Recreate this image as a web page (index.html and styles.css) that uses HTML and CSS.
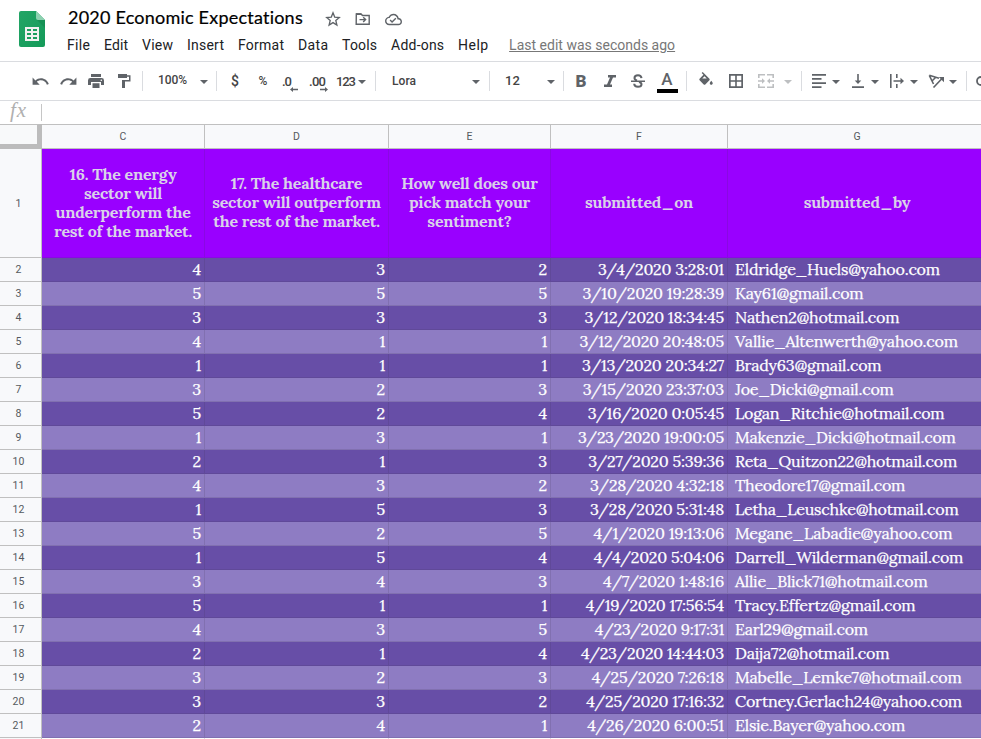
FILE: index.html
```html
<!DOCTYPE html>
<html lang="en">
<head>
<meta charset="utf-8">
<title>2020 Economic Expectations</title>
<link rel="stylesheet" href="styles.css">
</head>
<body>
<header class="top">
  <svg class="logo" viewBox="0 0 26 36" width="26" height="36">
    <defs><linearGradient id="g" x1="0" y1="0" x2="1" y2="1"><stop offset="0" stop-color="#23a566"/><stop offset="1" stop-color="#149a59"/></linearGradient></defs>
    <path d="M2 0H17L26 9V34a2 2 0 0 1-2 2H2a2 2 0 0 1-2-2V2a2 2 0 0 1 2-2z" fill="url(#g)"/>
    <path d="M18 9H26V17z" fill="#12834b" opacity=".5"/>
    <path d="M17 0L26 9H19a2 2 0 0 1-2-2z" fill="#8ed1b1"/>
    <path fill-rule="evenodd" d="M6 16H20V30H6zM8 18V20H12V18zM14 18V20H18V18zM8 22V24H12V22zM14 22V24H18V22zM8 26V28H12V26zM14 26V28H18V26z" fill="#f1f1f1"/>
  </svg>
  <div class="heading">
    <div class="title-row">
      <h1><span data-fit="235">2020 Economic Expectations</span></h1>
      <svg class="star" viewBox="0 0 16 16" width="16" height="16"><path d="M8 1.8L9.7 6.1L14.3 6.5L10.8 9.5L11.9 14L8 11.6L4.1 14L5.2 9.5L1.7 6.5L6.3 6.1Z" fill="none" stroke="#5f6368" stroke-width="1.3"/></svg>
      <svg class="folder" viewBox="0 0 16 14" width="16" height="14"><path d="M1.3 2H6l1.5 1.5h6.7V12.2H1.2z" fill="none" stroke="#5f6368" stroke-width="1.4"/><path d="M1 1.2H6L7.5 3H1z" fill="#5f6368"/><path d="M4.5 7.6H10.500M8.200 5.200L10.600 7.600L8.200 10" fill="none" stroke="#5f6368" stroke-width="1.4"/></svg>
      <svg class="cloud" viewBox="0 0 24 24" width="17" height="17"><path fill="#5f6368" d="M19.35 10.04C18.67 6.59 15.64 4 12 4 9.11 4 6.6 5.64 5.35 8.04 2.34 8.36 0 10.91 0 14c0 3.31 2.69 6 6 6h13c2.76 0 5-2.24 5-5 0-2.64-2.05-4.78-4.65-4.96zM19 18H6c-2.21 0-4-1.79-4-4 0-2.05 1.53-3.76 3.56-3.97l1.07-.11.5-.95C8.08 7.14 9.94 6 12 6c2.62 0 4.88 1.86 5.39 4.43l.3 1.5 1.53.11c1.56.1 2.78 1.41 2.78 2.96 0 1.65-1.35 3-3 3zm-9-3.82l-2.09-2.09L6.5 13.5 10 17l6.01-6.01-1.41-1.41z"/></svg>
    </div>
    <nav class="menu">
      <span data-fit="23">File</span><span data-fit="24">Edit</span><span data-fit="31">View</span><span data-fit="37">Insert</span><span data-fit="46">Format</span><span data-fit="30">Data</span><span data-fit="35">Tools</span><span data-fit="53">Add-ons</span><span data-fit="30">Help</span>
      <a class="edited" data-fit="166">Last edit was seconds ago</a>
    </nav>
  </div>
</header>

<div class="toolbar">
  <div class="btn"><svg viewBox="0 0 24 24" width="19" height="19"><path d="M12.5 8c-2.65 0-5.05.99-6.9 2.6L2 7v9h9l-3.62-3.62c1.39-1.16 3.16-1.88 5.12-1.88 3.54 0 6.55 2.31 7.6 5.5l2.37-.78C21.08 11.03 17.15 8 12.5 8z"/></svg></div>
  <div class="btn"><svg viewBox="0 0 24 24" width="19" height="19"><path d="M18.4 10.6C16.55 8.99 14.15 8 11.5 8c-4.65 0-8.58 3.03-9.96 7.22L3.9 16c1.05-3.19 4.05-5.5 7.6-5.5 1.95 0 3.73.72 5.12 1.88L13 16h9V7l-3.6 3.6z"/></svg></div>
  <div class="btn"><svg viewBox="0 0 16 14" width="16" height="14"><path d="M3 0H13V3H3zM2.400 4H13.600A2.400 2.400 0 0 1 16 6.400V11H13V8H3V11H0V6.400A2.400 2.400 0 0 1 2.400 4zM4.500 9.300H11.500V14H4.500z"/><circle cx="13.300" cy="6.300" r=".8" fill="#fff"/></svg></div>
  <div class="btn paint"><svg viewBox="0 0 14 14" width="14" height="14"><path d="M1 0H10V1.300H13.500V7.500H8V14H5V6H12V2.800H10V4H1z"/></svg></div>
  <i class="sep after-paint"></i>
  <div class="pick zoom"><span data-fit="29">100%</span><b class="caret"></b></div>
  <i class="sep"></i>
  <div class="btn money"><span>$</span></div>
  <div class="btn small"><span>%</span></div>
  <div class="btn decimal"><span data-fit="10">.0</span><svg viewBox="0 0 8 5" width="8" height="5"><path d="M0 2.500L3 0V1.700H8V3.300H3V5z"/></svg></div>
  <div class="btn decimal two"><span data-fit="17">.00</span><svg viewBox="0 0 8 5" width="8" height="5"><path d="M8 2.500L5 0V1.700H0V3.300H5V5z"/></svg></div>
  <div class="pick numbers"><span data-fit="20">123</span><b class="caret"></b></div>
  <i class="sep"></i>
  <div class="pick font"><span data-fit="24">Lora</span><b class="caret"></b></div>
  <i class="sep"></i>
  <div class="pick size"><span>12</span><b class="caret"></b></div>
  <i class="sep"></i>
  <div class="btn bold"><span>B</span></div>
  <div class="btn italic"><svg viewBox="0 0 12 12" width="12" height="12"><path d="M4 0H12V2.400H9L6 9.600H8V12H0V9.600H3L6 2.400H4z"/></svg></div>
  <div class="btn"><svg viewBox="0 0 14 14" width="14" height="14"><path d="M0 6.500H14V8H0z"/><path d="M10.500 4.200C10.300 2.300 9 1.300 7 1.300S3.500 2.300 3.500 4C3.500 5.200 4.300 6 6 6.500M8 8C9.800 8.500 10.500 9.200 10.500 10.300C10.500 11.900 9.200 12.800 7 12.800S3.300 11.800 3.200 9.800" fill="none" stroke="#5f6368" stroke-width="2"/></svg></div>
  <div class="btn ink"><span>A</span><em></em></div>
  <i class="sep after-ink"></i>
  <div class="btn fill"><svg viewBox="0 0 24 24" width="18" height="18"><path d="M16.560 8.940L7.620 0 6.210 1.410l2.380 2.380-5.150 5.150c-.59.59-.59 1.540 0 2.120l5.500 5.500c.29.29.68.44 1.060.44s.77-.15 1.060-.44l5.500-5.500c.59-.58.59-1.530 0-2.120zM7 8.500L10 5.500 13 8.500zM19 11.500s-2 2.170-2 3.500c0 1.100.9 2 2 2s2-.9 2-2c0-1.330-2-3.500-2-3.500z"/></svg></div>
  <div class="btn borders"><svg viewBox="0 0 14 14" width="14" height="14"><path fill-rule="evenodd" d="M0 0H14V14H0zM1.700 1.700V6.200H6.200V1.700zM7.800 1.700V6.200H12.300V1.700zM1.700 7.800V12.300H6.200V7.800zM7.800 7.800V12.300H12.300V7.800z"/></svg></div>
  <div class="btn merge"><svg viewBox="0 0 16 14" width="16" height="14"><path d="M0 0H7V1.600H1.600V4H0zM9 0H16V4H14.400V1.600H9zM0 10H1.600V12.400H7V14H0zM14.400 10H16V14H9V12.400H14.400zM0 6.200H4V4.200L7 7L4 9.800V7.800H0zM16 6.200H12V4.200L9 7L12 9.800V7.800H16z"/></svg></div>
  <b class="caret pale"></b>
  <i class="sep after-merge"></i>
  <div class="tool first"><svg viewBox="0 0 14 14" width="14" height="14"><path d="M0 0H14V1.700H0zM0 4.100H9.500V5.800H0zM0 8.200H14V9.900H0zM0 12.300H9.500V14H0z"/></svg></div><b class="caret"></b>
  <div class="tool"><svg viewBox="0 0 14 14" width="14" height="14"><path d="M1 12.300H13V14H1zM6.200 0H7.800V6.500H10.300L7 10L3.700 6.500H6.200z"/></svg></div><b class="caret"></b>
  <div class="tool"><svg viewBox="0 0 14 14" width="14" height="14"><path d="M0 0H1.600V14H0zM6 0H7.600V4H6zM6 10H7.600V14H6zM3.500 6.200H10.500V3.800L14 7L10.500 10.200V7.800H3.500z"/></svg></div><b class="caret"></b>
  <div class="tool"><svg viewBox="0 0 16 14" width="16" height="14"><path d="M1.300 1.300L11 4.200M1.300 1.300L5.500 10M4 7L7.800 3.300M5.500 13.500L13.800 4.700" fill="none" stroke="#5f6368" stroke-width="1.6"/><path d="M10.800 3H16V8.200z"/></svg></div><b class="caret"></b>
  <i class="sep after-tools"></i>
  <div class="link"><svg viewBox="0 0 18 10" width="18" height="10"><path d="M8 1H5A4 4 0 0 0 5 9H8M5 5H13" fill="none" stroke="#5f6368" stroke-width="1.8"/></svg></div>
</div>

<div class="formula"><span class="fx">fx</span><i></i></div>
<main class="sheet" id="sheet"></main>
<script src="script.js"></script>
</body>
</html>
```

FILE: styles.css
```css
* { box-sizing: border-box; }
body {
  margin: 0;
  width: 981px;
  height: 739px;
  overflow: hidden;
  background: #fff;
  color: #202124;
  font-family: Roboto, "Liberation Sans", sans-serif;
}
svg { display: block; flex: none; }
[data-fit] { display: inline-block; white-space: nowrap; }

.top { display: flex; height: 61px; padding: 11px 0 0 19px; }
.heading { margin: -11px 0 0 22px; padding-left: 1px; }
.title-row { display: flex; height: 36px; align-items: center; }
h1 { margin: -2px 0 0; width: 257px; font: 400 18px/24px Lato, Roboto, sans-serif; color: #000; -webkit-text-stroke: .2px #000; }
.star { margin-top: 2px; }
.folder { margin: 2px 0 0 14px; }
.cloud { margin: 3px 0 0 14px; }
.menu { display: flex; gap: 14px; margin-left: -1px; font-size: 14px; line-height: 18px; }
.edited { margin-left: 7px; color: #777; text-decoration: underline; }

.toolbar {
  display: flex;
  align-items: center;
  height: 39px;
  padding-left: 26px;
  border-top: 1px solid #dadce0;
  overflow: hidden;
  color: #444;
  font-size: 12px;
  font-weight: 500;
}
.toolbar svg { fill: #5f6368; }
.btn { flex: none; width: 28px; height: 38px; display: flex; align-items: center; justify-content: center; }
.paint { width: 29px; padding-right: 1px; }
.sep { flex: none; width: 1px; height: 20px; background: #dadce0; }
.after-paint { margin-left: 3px; }
.pick { flex: none; display: flex; align-items: center; justify-content: space-between; height: 38px; }
.caret { flex: none; width: 8px; height: 4px; margin-top: 2px; background: #5f6368; clip-path: polygon(0 0, 100% 0, 50% 100%); }
.zoom { width: 73px; padding: 0 8px 0 15px; }
.zoom span, .size span { margin-top: -2px; }
.money { margin-left: 4px; font-size: 14px; }
.small { font-size: 12px; }
.decimal { width: 27px; flex-direction: column; align-items: flex-start; padding: 3px 0 0 5px; font-size: 13px; line-height: 15px; }
.decimal svg { margin: -2px 0 0 8px; }
.two { width: 29px; padding-left: 5px; }
.two svg { margin-left: 11px; }
.numbers { width: 42px; padding: 0 9px 0 3px; font-size: 13px; }
.font { width: 113px; padding: 0 9px 0 16px; }
.size { width: 73px; padding: 0 8px 0 15px; font-size: 13px; }
.bold { margin-left: 3px; color: #5f6368; font-size: 17px; font-weight: 900; }
.italic { width: 29px; }
.ink { width: 30px; flex-direction: column; color: #5f6368; font-size: 17px; line-height: 16px; padding-top: 3px; }
.ink em { width: 21px; height: 4px; margin-top: 2px; background: #000; }
.ink span { margin-top: -1px; }
.after-ink { margin-left: 4px; }
.fill { margin-left: 5px; }
.borders { width: 32px; }
.merge svg { fill: #bdbfc1; }
.pale { margin-left: 4px; background: #bdbfc1; }
.after-merge { margin-left: 9px; }
.tool { flex: none; display: flex; justify-content: center; width: 16px; margin: 0 5px 0 10px; }
.first { margin-left: 9px; }
.after-tools { margin-left: 9px; }
.link { margin-left: 9px; }

.formula { display: flex; height: 24px; border-top: 1px solid #dadce0; }
.fx { width: 41px; padding-left: 10px; color: #b0b0b0; font: italic 21px/18px "Liberation Serif", serif; letter-spacing: 1px; }
.formula i { width: 1px; height: 17px; margin-top: 3px; background: #c6c6c6; }

.sheet {
  display: grid;
  grid-template-columns: 42px 163px 184px 162px 177px 259px;
  grid-template-rows: 25px 109px repeat(20, 24px) 24px;
  width: 987px;
}
.corner { background: #f8f9fa; border: solid #bcbcbc; border-width: 1px 5px 5px 0; border-top-color: #c0c0c0; }
.col, .num {
  display: flex;
  align-items: center;
  justify-content: center;
  background: #f8f9fb;
  border: 0 solid #c0c0c0;
  color: #55595e;
  font-size: 10.5px;
}
.col { border-width: 1px 1px 1px 0; }
.num { border-width: 0 1px 1px 0; padding-right: 4px; }
.head, .cell {
  display: flex;
  align-items: center;
  border: solid rgba(60, 50, 80, .16);
  border-width: 0 1px 1px 0;
  font-family: Lora, "Liberation Serif", serif;
  letter-spacing: -.21px;
}
.head {
  flex-direction: column;
  justify-content: center;
  padding-bottom: 1px;
  background: #90f;
  color: #d9d2e9;
  font-size: 16px;
  font-weight: 700;
  line-height: 19px;
}
.cell { justify-content: flex-end; padding: 0 3px 1px; color: #fff; font-size: 16px; line-height: 22px; background: #674ea7; -webkit-text-stroke: .25px #fff; }
.light { background: #8e7cc3; }
.email { justify-content: flex-start; padding-left: 7px; }
.blank { background: #fff; }
```

FILE: script.js
```js
const headings = [
  ["16. The energy", "sector will", "underperform the", "rest of the market."],
  ["17. The healthcare", "sector will outperform", "the rest of the market."],
  ["How well does our", "pick match your", "sentiment?"],
  ["submitted_on"],
  ["submitted_by"]
];

// Three ratings, timestamp, address.
const rows = [
  ["432", "3/4/2020 3:28:01", "Eldridge_Huels@yahoo.com"],
  ["555", "3/10/2020 19:28:39", "Kay61@gmail.com"],
  ["333", "3/12/2020 18:34:45", "Nathen2@hotmail.com"],
  ["411", "3/12/2020 20:48:05", "Vallie_Altenwerth@yahoo.com"],
  ["111", "3/13/2020 20:34:27", "Brady63@gmail.com"],
  ["323", "3/15/2020 23:37:03", "Joe_Dicki@gmail.com"],
  ["524", "3/16/2020 0:05:45", "Logan_Ritchie@hotmail.com"],
  ["131", "3/23/2020 19:00:05", "Makenzie_Dicki@hotmail.com"],
  ["213", "3/27/2020 5:39:36", "Reta_Quitzon22@hotmail.com"],
  ["432", "3/28/2020 4:32:18", "Theodore17@gmail.com"],
  ["153", "3/28/2020 5:31:48", "Letha_Leuschke@hotmail.com"],
  ["525", "4/1/2020 19:13:06", "Megane_Labadie@yahoo.com"],
  ["154", "4/4/2020 5:04:06", "Darrell_Wilderman@gmail.com"],
  ["343", "4/7/2020 1:48:16", "Allie_Blick71@hotmail.com"],
  ["511", "4/19/2020 17:56:54", "Tracy.Effertz@gmail.com"],
  ["435", "4/23/2020 9:17:31", "Earl29@gmail.com"],
  ["214", "4/23/2020 14:44:03", "Daija72@hotmail.com"],
  ["323", "4/25/2020 7:26:18", "Mabelle_Lemke7@hotmail.com"],
  ["332", "4/25/2020 17:16:32", "Cortney.Gerlach24@yahoo.com"],
  ["241", "4/26/2020 6:00:51", "Elsie.Bayer@yahoo.com"]
];

const div = (cls, body) => `<div class="${cls}">${body}</div>`;

let html = div("corner", "");
for (const letter of "CDEFG") html += div("col", letter);
html += div("num", 1);
for (const lines of headings) html += div("head", lines.map(t => `<span>${t}</span>`).join(""));
rows.forEach(([ratings, date, email], i) => {
  const band = i % 2 ? "cell light" : "cell";
  html += div("num", i + 2);
  for (const r of ratings) html += div(band, r);
  html += div(band, date);
  html += div(band + " email", email);
});
html += div("num", "") + div("cell blank", "").repeat(5);
document.getElementById("sheet").innerHTML = html;

// Space the letters so that each toolbar and menu label takes its set width.
for (const el of document.querySelectorAll("[data-fit]")) {
  const gap = (el.dataset.fit - el.getBoundingClientRect().width) / (el.textContent.length - 1);
  el.style.letterSpacing = gap + "px";
  el.style.marginRight = -gap + "px";
}
```
